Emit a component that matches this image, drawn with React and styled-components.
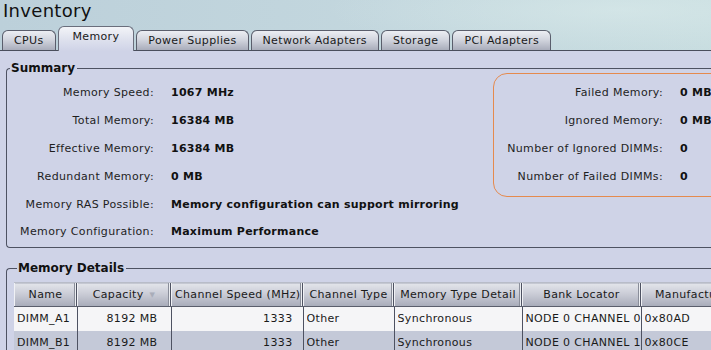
import React from "react";
import styled, { createGlobalStyle, css } from "styled-components";

const Global = createGlobalStyle`
  html, body { margin: 0; padding: 0; }
  body {
    font-family: "DejaVu Sans", Verdana, sans-serif;
    font-size: 11px;
    letter-spacing: 0.35px;
    color: #161616;
  }
`;

const Page = styled.div`
  width: 711px;
  height: 350px;
  overflow: hidden;
  background: #cfd3e7;
`;

const Header = styled.div`
  height: 51px;
  box-sizing: border-box;
  background:
    radial-gradient(ellipse 420px 60px at 620px 10px, rgba(220,236,236,0.55), rgba(220,236,236,0) 70%),
    linear-gradient(to right, #bcd0da 0%, #c3d7de 55%, #c8dde0 100%);
  display: flex;
  flex-direction: column;
  justify-content: space-between;
  border-bottom: 1px solid #4a4e5c;
`;

const Title = styled.h1`
  margin: 0;
  padding: 0 0 0 3px;
  font-size: 18px;
  font-weight: normal;
  letter-spacing: 0.3px;
  line-height: 22px;
  color: #111;
`;

const TabStrip = styled.div`
  display: flex;
  align-items: flex-end;
  gap: 2px;
  padding-left: 2px;
`;

const Tab = styled.div`
  box-sizing: border-box;
  height: 20px;
  padding: 0 11px;
  line-height: 19px;
  border: 1px solid #5a5e6c;
  border-bottom: none;
  border-radius: 6px 6px 0 0;
  background: linear-gradient(to bottom, #eceef3 0%, #d3d6df 45%, #a9adbb 100%);
  color: #1a1a1a;
  white-space: nowrap;
  ${(p) =>
    p.$active &&
    css`
      padding: 0 14px;
      margin-bottom: -1px;
      height: 25px;
      line-height: 19px;
      background: linear-gradient(to bottom, #f3f4f8 0%, #dfe2ee 50%, #cfd3e7 100%);
      border-color: #6a6e7c;
    `}
`;

const Panel = styled.fieldset`
  margin: ${(p) => p.$mt}px 0 0 6px;
  padding: ${(p) => p.$pt}px 0 0 ${(p) => p.$pl}px;
  width: 760px;
  min-width: 0;
  box-sizing: border-box;
  height: ${(p) => p.$h}px;
  border: 1px solid #4e5262;
  border-radius: 4px;
  border-right: none;
  ${(p) => p.$open && css`border-bottom: none;`}
`;

const Legend = styled.legend`
  padding: 0 2px 0 1px;
  margin-left: 3px;
  font-size: 12px;
  font-weight: bold;
  letter-spacing: 0;
  line-height: 14px;
  color: #111;
`;

const SummaryBody = styled.div`
  display: flex;
  align-items: flex-start;
`;

const InfoGrid = styled.div`
  display: grid;
  grid-template-columns: ${(p) => p.$labelW}px auto;
  column-gap: 17px;
  grid-auto-rows: 27.8px;
  align-items: center;
`;

const LeftInfo = styled(InfoGrid)`
  width: 486px;
  flex: none;
  padding-top: 3px;
`;

const AlertBox = styled(InfoGrid)`
  margin-top: -3px;
  width: 260px;
  flex: none;
  box-sizing: border-box;
  padding: 5px 0 6px;
  border: 1px solid #e58a4e;
  border-radius: 14px;
`;

const Label = styled.div`
  text-align: right;
  white-space: nowrap;
  color: #1e1e1e;
`;

const Value = styled.div`
  font-weight: bold;
  letter-spacing: 0.25px;
  white-space: nowrap;
  color: #111;
`;

const Table = styled.table`
  border-collapse: collapse;
  table-layout: fixed;
  width: 746px;
`;

const Th = styled.th`
  box-sizing: border-box;
  height: 24px;
  padding: 0 4px 0 ${(p) => p.$pl ?? 4}px;
  font-weight: normal;
  text-align: ${(p) => p.$align || "center"};
  white-space: nowrap;
  overflow: hidden;
  color: #1a1a1a;
  background: linear-gradient(to bottom, #e2e4ea 0%, #caccd6 45%, #a7abb9 100%);
  border-top: 1px solid #b8bcc8;
  border-bottom: 1px solid #5a5e6c;
  box-shadow: inset -1px 0 0 #4e5262, inset -2px 0 0 #eceef2, inset -3px 0 0 #8a8e9a, inset 1px 0 0 #f0f1f5;
`;

const Sort = styled.span`
  margin-left: 6px;
  font-size: 7px;
  color: #a9adb9;
  vertical-align: 1px;
`;

const Tr = styled.tr`
  background: ${(p) => (p.$alt ? "#c4c9d8" : "#f5f5f7")};
`;

const Td = styled.td`
  box-sizing: border-box;
  height: 24px;
  padding: 0 ${(p) => (p.$right ? p.$pr : 0)}px 0 3px;
  text-align: ${(p) => (p.$right ? "right" : "left")};
  white-space: nowrap;
  overflow: hidden;
  border-right: 1px solid #4e5262;
  color: #1a1a1a;
`;

const CellText = styled.div`
  overflow: hidden;
  white-space: nowrap;
`;

const columns = [
  { title: "Name", w: 63 },
  { title: "Capacity", w: 94, sort: true, right: true, pr: 13 },
  { title: "Channel Speed (MHz)", w: 132, right: true, pr: 10 },
  { title: "Channel Type", w: 91 },
  { title: "Memory Type Detail", w: 128 },
  { title: "Bank Locator", w: 119 },
  { title: "Manufacturer", w: 119, align: "left", pl: 14 },
];

const rows = [
  ["DIMM_A1", "8192 MB", "1333", "Other", "Synchronous", "NODE 0 CHANNEL 0 DIMM 0", "0x80AD"],
  ["DIMM_B1", "8192 MB", "1333", "Other", "Synchronous", "NODE 0 CHANNEL 1 DIMM 0", "0x80CE"],
];

const summary = [
  ["Memory Speed:", "1067 MHz"],
  ["Total Memory:", "16384 MB"],
  ["Effective Memory:", "16384 MB"],
  ["Redundant Memory:", "0 MB"],
  ["Memory RAS Possible:", "Memory configuration can support mirroring"],
  ["Memory Configuration:", "Maximum Performance"],
];

const failures = [
  ["Failed Memory:", "0 MB"],
  ["Ignored Memory:", "0 MB"],
  ["Number of Ignored DIMMs:", "0"],
  ["Number of Failed DIMMs:", "0"],
];

const tabs = ["CPUs", "Memory", "Power Supplies", "Network Adapters", "Storage", "PCI Adapters"];

export default function App() {
  return (
    <Page>
      <Global />
      <Header>
        <Title>Inventory</Title>
        <TabStrip>
          {tabs.map((t) => (
            <Tab key={t} $active={t === "Memory"}>
              {t}
            </Tab>
          ))}
        </TabStrip>
      </Header>

      <Panel $mt={10} $pt={1} $pl={0} $h={187}>
        <Legend>Summary</Legend>
        <SummaryBody>
          <LeftInfo $labelW={147}>
            {summary.map(([l, v]) => (
              <React.Fragment key={l}>
                <Label>{l}</Label>
                <Value>{v}</Value>
              </React.Fragment>
            ))}
          </LeftInfo>
          <AlertBox $labelW={169}>
            {failures.map(([l, v]) => (
              <React.Fragment key={l}>
                <Label>{l}</Label>
                <Value>{v}</Value>
              </React.Fragment>
            ))}
          </AlertBox>
        </SummaryBody>
      </Panel>

      <Panel $mt={13} $pt={7} $pl={7} $h={120} $open>
        <Legend>Memory Details</Legend>
        <Table>
          <colgroup>
            {columns.map((c) => (
              <col key={c.title} style={{ width: c.w }} />
            ))}
          </colgroup>
          <thead>
            <tr>
              {columns.map((c) => (
                <Th key={c.title} $align={c.align} $pl={c.pl}>
                  {c.title}
                  {c.sort && <Sort>▼</Sort>}
                </Th>
              ))}
            </tr>
          </thead>
          <tbody>
            {rows.map((r, i) => (
              <Tr key={r[0]} $alt={i % 2 === 1}>
                {r.map((cell, j) => (
                  <Td key={j} $right={columns[j].right} $pr={columns[j].pr}>
                    <CellText>{cell}</CellText>
                  </Td>
                ))}
              </Tr>
            ))}
          </tbody>
        </Table>
      </Panel>
    </Page>
  );
}
